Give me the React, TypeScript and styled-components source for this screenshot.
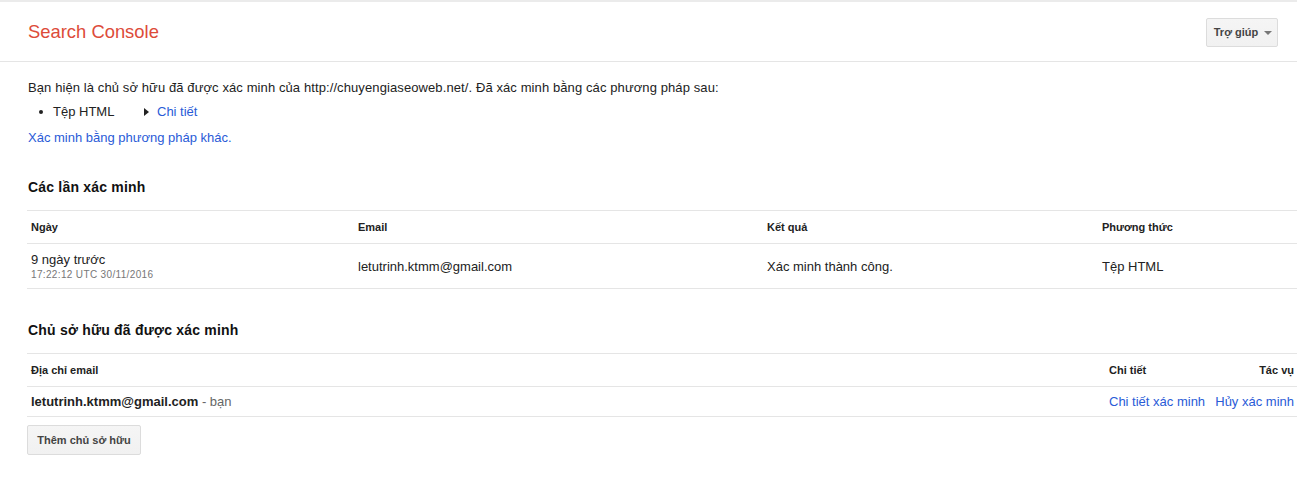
import React from "react";
import styled, { createGlobalStyle } from "styled-components";

const Global = createGlobalStyle`
  html, body { margin: 0; padding: 0; background: #fff; }
  body { font-family: "Liberation Sans", Arial, sans-serif; color: #222; font-size: 13px; }
`;

const Page = styled.div`
  border-top: 2px solid #ebebeb;
  width: 1297px;
`;

const Header = styled.header`
  height: 59px;
  border-bottom: 1px solid #e5e5e5;
  display: flex;
  align-items: center;
  justify-content: space-between;
  padding: 0 19px 0 28px;
`;

const Title = styled.div`
  color: #dd4b39;
  font-size: 18.4px;
  margin-top: 1px;
`;

const HelpButton = styled.button`
  height: 29px;
  width: 72px;
  margin-top: 1px;
  border: 1px solid #dcdcdc;
  border-radius: 2px;
  background: linear-gradient(#f5f5f5, #f1f1f1);
  font-family: "Liberation Sans", Arial, sans-serif;
  font-size: 11px;
  font-weight: bold;
  color: #444;
  display: flex;
  align-items: center;
  justify-content: center;
  gap: 6px;
  padding: 0 0 0 2px;
`;

const Caret = styled.span`
  width: 0;
  height: 0;
  border-left: 4px solid transparent;
  border-right: 4px solid transparent;
  border-top: 4px solid #777;
  margin-top: 1px;
`;

const Content = styled.main`
  padding: 16px 0 0 27px;
`;

const Para = styled.div`
  line-height: 17px;
  margin: 1px 0 0 1px;
  letter-spacing: 0.1px;
`;

const MethodList = styled.ul`
  margin: 7px 0 0 0;
  padding: 0 0 0 26px;
  line-height: 17px;
`;

const MethodItem = styled.li`
  display: flex;
  align-items: center;
  list-style: none;
  position: relative;
  &::before {
    content: "";
    position: absolute;
    left: -14px;
    top: 7px;
    width: 4px;
    height: 4px;
    border-radius: 50%;
    background: #222;
  }
`;

const MethodName = styled.span`
  width: 88px;
`;

const Arrow = styled.span`
  width: 0;
  height: 0;
  border-top: 4px solid transparent;
  border-bottom: 4px solid transparent;
  border-left: 5px solid #222;
  margin: 0 8px 0 3px;
`;

const Link = styled.a`
  color: #2a5bd7;
  text-decoration: none;
  cursor: pointer;
`;

const OtherLink = styled(Link)`
  display: block;
  margin: 9px 0 0 1px;
  line-height: 17px;
`;

const SectionTitle = styled.h2<{ $top: number }>`
  font-size: 14px;
  font-weight: bold;
  letter-spacing: 0.2px;
  margin: ${(p) => p.$top}px 0 0 1px;
  line-height: 17px;
  color: #111;
`;

const Table = styled.div<{ $cols: string }>`
  display: grid;
  grid-template-columns: ${(p) => p.$cols};
  width: 1270px;
  border-top: 1px solid #e5e5e5;
  margin-top: 14px;
`;

const HeadCell = styled.div<{ $right?: boolean }>`
  height: 32px;
  display: flex;
  align-items: center;
  justify-content: ${(p) => (p.$right ? "flex-end" : "flex-start")};
  padding: 0 ${(p) => (p.$right ? "3px" : "0")} 0 4px;
  font-size: 11px;
  font-weight: bold;
  color: #222;
  border-bottom: 1px solid #e5e5e5;
`;

const Cell = styled.div<{ $h: number; $right?: boolean }>`
  height: ${(p) => p.$h}px;
  display: flex;
  flex-direction: column;
  justify-content: center;
  align-items: ${(p) => (p.$right ? "flex-end" : "flex-start")};
  padding: 0 ${(p) => (p.$right ? "3px" : "0")} 0 4px;
  border-bottom: 1px solid #e5e5e5;
  font-size: 13px;
  color: #222;
`;

const SubText = styled.div`
  font-size: 10px;
  letter-spacing: 0.35px;
  color: #777;
  margin-top: 2px;
`;

const Strong = styled.span`
  font-weight: bold;
  color: #222;
`;

const Muted = styled.span`
  color: #666;
`;

const ActionLinks = styled.div`
  display: flex;
  gap: 7px;
  white-space: nowrap;
`;

const AddButton = styled.button`
  margin-top: 8px;
  height: 30px;
  width: 114px;
  border: 1px solid #dcdcdc;
  border-radius: 2px;
  background: linear-gradient(#f5f5f5, #f1f1f1);
  font-family: "Liberation Sans", Arial, sans-serif;
  font-size: 11px;
  font-weight: bold;
  color: #444;
  padding: 0;
`;

export default function App() {
  return (
    <>
      <Global />
      <Page>
        <Header>
          <Title>Search Console</Title>
          <HelpButton>
            Trợ giúp <Caret />
          </HelpButton>
        </Header>
        <Content>
          <Para>
            Bạn hiện là chủ sở hữu đã được xác minh của http://chuyengiaseoweb.net/. Đã xác minh bằng các phương pháp sau:
          </Para>
          <MethodList>
            <MethodItem>
              <MethodName>Tệp HTML</MethodName>
              <Arrow />
              <Link>Chi tiết</Link>
            </MethodItem>
          </MethodList>
          <OtherLink>Xác minh bằng phương pháp khác.</OtherLink>

          <SectionTitle $top={33}>Các lần xác minh</SectionTitle>
          <Table $cols="327px 409px 335px 1fr">
            <HeadCell>Ngày</HeadCell>
            <HeadCell>Email</HeadCell>
            <HeadCell>Kết quả</HeadCell>
            <HeadCell>Phương thức</HeadCell>
            <Cell $h={44}>
              <div>9 ngày trước</div>
              <SubText>17:22:12 UTC 30/11/2016</SubText>
            </Cell>
            <Cell $h={44}>letutrinh.ktmm@gmail.com</Cell>
            <Cell $h={44}>Xác minh thành công.</Cell>
            <Cell $h={44}>Tệp HTML</Cell>
          </Table>

          <SectionTitle $top={33}>Chủ sở hữu đã được xác minh</SectionTitle>
          <Table $cols="1078px 1fr 90px">
            <HeadCell>Địa chỉ email</HeadCell>
            <HeadCell>Chi tiết</HeadCell>
            <HeadCell $right>Tác vụ</HeadCell>
            <Cell $h={29}>
              <div>
                <Strong>letutrinh.ktmm@gmail.com</Strong> <Muted>- bạn</Muted>
              </div>
            </Cell>
            <Cell $h={29}>
              <ActionLinks>
                <Link>Chi tiết xác minh</Link>
              </ActionLinks>
            </Cell>
            <Cell $h={29} $right>
              <Link>Hủy xác minh</Link>
            </Cell>
          </Table>
          <AddButton>Thêm chủ sở hữu</AddButton>
        </Content>
      </Page>
    </>
  );
}
